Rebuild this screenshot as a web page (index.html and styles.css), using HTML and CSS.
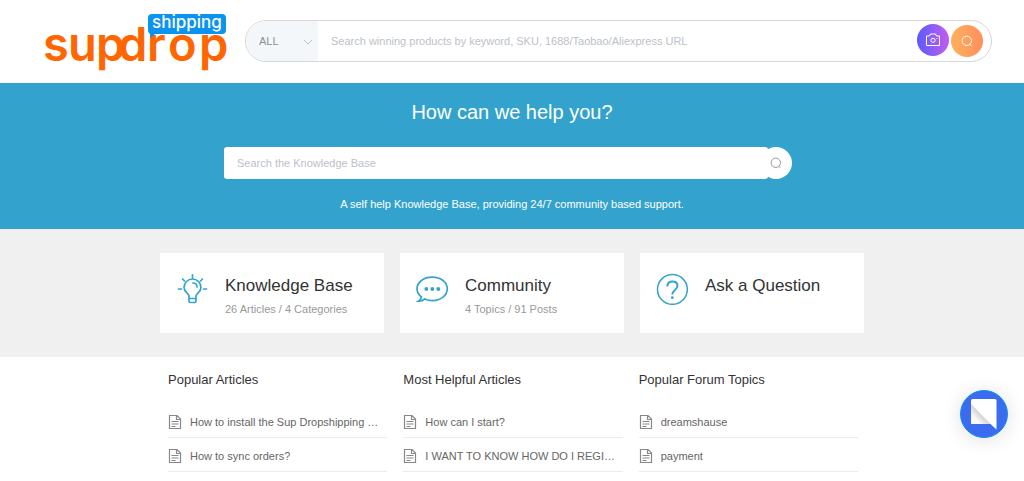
FILE: index.html
```html
<!DOCTYPE html>
<html lang="en">
<head>
<meta charset="utf-8">
<meta name="viewport" content="width=device-width, initial-scale=1">
<title>Help Center</title>
<link rel="stylesheet" href="styles.css">
</head>
<body>
<svg class="sprite" aria-hidden="true">
  <symbol id="doc" viewBox="0 0 14 16"><path d="M1.500 1.500h7.500l3.500 3.500v9.500h-11zM8.500 1.500v4h4M3.500 7.500h7M3.500 10h7M3.500 12.500h4" fill="none" stroke="currentColor" stroke-width="1.200"/></symbol>
  <symbol id="search" viewBox="0 0 12 12"><circle cx="5.800" cy="5.800" r="4.700" fill="none" stroke="currentColor"/><path d="M8.500 9.200l2 1.600" fill="none" stroke="currentColor"/></symbol>
</svg>

<header class="header">
  <a class="logo" href="#" aria-label="Sup Dropshipping">
    <svg viewBox="0 0 190 64" width="190" height="64">
      <text class="logo-word" y="52" x="-2 23 51 73 102 123 154">supdrop</text>
      <path class="logo-bubble" d="M107 5h70a4 4 0 0 1 4 4v12a4 4 0 0 1-4 4h-67l-5 4v-4a4 4 0 0 1-2-4V9a4 4 0 0 1 4-4z"/>
      <text class="logo-tag" x="107" y="19">shipping</text>
    </svg>
  </a>
  <form class="search">
    <div class="category">
      <select aria-label="Category"><option>ALL</option></select>
      <svg class="chevron" viewBox="0 0 10 6" width="10" height="6"><path d="M1 1l4 4 4-4" fill="none" stroke="currentColor"/></svg>
    </div>
    <input class="search-input" type="text" aria-label="Search products" placeholder="Search winning products by keyword, SKU, 1688/Taobao/Aliexpress URL">
    <button class="round camera" type="button" aria-label="Search by image">
      <svg viewBox="0 0 16 14" width="16" height="14" fill="none" stroke="currentColor"><path d="M1.500 3h3l1-2h5l1 2h3v9.500h-13z"/><circle cx="8" cy="7.300" r="2.100"/><path d="M11.500 5.500h1"/></svg>
    </button>
    <button class="round find" type="button" aria-label="Search"><svg width="12" height="12"><use href="#search"/></svg></button>
  </form>
</header>

<main>
  <section class="hero">
    <h1>How can we help you?</h1>
    <form class="kb">
      <input type="text" aria-label="Search the Knowledge Base" placeholder="Search the Knowledge Base">
      <button type="button" aria-label="Search"><svg width="12" height="12"><use href="#search"/></svg></button>
    </form>
    <p>A self help Knowledge Base, providing 24/7 community based support.</p>
  </section>

  <section class="band">
    <div class="cards">
      <a class="card" href="#">
        <svg viewBox="0 0 32 32" width="32" height="32" fill="none" stroke="currentColor" stroke-width="1.700" stroke-linecap="round">
          <path d="M13 25v-2c0-2.500-5-4-5-8.500a8.500 8.500 0 0 1 17 0c0 4.500-5 6-5 8.500v5q0 1.500-1.500 1.500h-4q-1.500 0-1.500-1.500zM13 25.500h7M17 10a4 4 0 0 1 4 4M16.500 1.800v3M2.500 16h3M27.500 16h3M6.500 6l2 2M26.500 6l-2 2"/>
        </svg>
        <div class="card-text"><h2>Knowledge Base</h2><p>26 Articles / 4 Categories</p></div>
      </a>
      <a class="card" href="#">
        <svg viewBox="0 0 32 32" width="32" height="32" fill="none" stroke="currentColor" stroke-width="1.700">
          <path d="M5.500 24C2.800 22 1 19 1 15.800c0-6.600 6.700-11.600 15.300-11.600s15 5 15 11.600-6.500 11.800-15 11.800c-3 0-5.500-.6-7.500-1.700-1.500 1.500-3.500 2.400-6.500 2.300 2-1.200 2.700-2.300 3.200-4.200z"/>
          <g fill="currentColor" stroke="none"><circle cx="10.300" cy="16" r="1.900"/><circle cx="16.300" cy="16" r="1.900"/><circle cx="22.300" cy="16" r="1.900"/></g>
        </svg>
        <div class="card-text"><h2>Community</h2><p>4 Topics / 91 Posts</p></div>
      </a>
      <a class="card" href="#">
        <svg viewBox="0 0 32 32" width="32" height="32" fill="none" stroke="currentColor" stroke-width="1.500">
          <circle cx="16.400" cy="16.400" r="14.900"/>
          <path d="M11.300 13.500c0-3 2-5 5.200-5s5 2 5 4.500c0 4-5.200 4-5.200 8.500" stroke-width="1.900"/><circle cx="16.300" cy="24.700" r="1.400" fill="currentColor" stroke="none"/>
        </svg>
        <div class="card-text"><h2>Ask a Question</h2></div>
      </a>
    </div>
  </section>

  <section class="lists">
    <div class="list">
      <h3>Popular Articles</h3>
      <ul>
        <li><svg width="14" height="16"><use href="#doc"/></svg><a href="#">How to install the Sup Dropshipping …</a></li>
        <li><svg width="14" height="16"><use href="#doc"/></svg><a href="#">How to sync orders?</a></li>
      </ul>
    </div>
    <div class="list">
      <h3>Most Helpful Articles</h3>
      <ul>
        <li><svg width="14" height="16"><use href="#doc"/></svg><a href="#">How can I start?</a></li>
        <li><svg width="14" height="16"><use href="#doc"/></svg><a href="#">I WANT TO KNOW HOW DO I REGI…</a></li>
      </ul>
    </div>
    <div class="list">
      <h3>Popular Forum Topics</h3>
      <ul>
        <li><svg width="14" height="16"><use href="#doc"/></svg><a href="#">dreamshause</a></li>
        <li><svg width="14" height="16"><use href="#doc"/></svg><a href="#">payment</a></li>
      </ul>
    </div>
  </section>
</main>

<button class="chat" type="button" aria-label="Open chat">
  <svg viewBox="0 0 26 31" width="26" height="31">
    <defs><linearGradient id="fold" x1="1" y1="0" x2="0" y2="1"><stop offset=".5" stop-color="#d2d2d2"/><stop offset=".75" stop-color="#f8f8f8"/></linearGradient></defs>
    <path d="M1.500 0h22.500q1.500 0 1.500 1.500v29L19.500 25h-18Q0 25 0 23.500v-22Q0 0 1.500 0z" fill="#fff"/>
    <path d="M0 5l19.500 20h-18Q0 25 0 23.500z" fill="url(#fold)"/>
  </svg>
</button>
</body>
</html>
```

FILE: styles.css
```css
* {
  box-sizing: border-box;
}

body {
  margin: 0;
  background: #fff;
  color: #333;
  font-family: "Liberation Sans", Arial, sans-serif;
  font-size: 11px;
  line-height: 16px;
}

h1, h2, h3, p, ul {
  margin: 0;
  padding: 0;
  font-weight: 400;
}

a {
  color: inherit;
  text-decoration: none;
}

input, select, button {
  margin: 0;
  border: 0;
  padding: 0;
  font: inherit;
}

input::placeholder {
  color: #bcc1c8;
  opacity: 1;
}

.sprite {
  display: none;
}

.header {
  display: flex;
  align-items: center;
  gap: 10px;
  padding: 9px 32px 10px 45px;
}

.logo {
  flex: none;
  height: 64px;
}

.logo svg {
  display: block;
  overflow: visible;
}

.logo-word {
  fill: #ff6600;
  font-family: Inter, sans-serif;
  font-size: 47px;
  font-weight: 600;
}

.logo-bubble {
  fill: #0a94f0;
}

.logo-tag {
  fill: #fff;
  font-family: Inter, sans-serif;
  font-size: 17px;
  font-weight: 500;
}

.search {
  display: flex;
  flex: 1;
  align-items: center;
  height: 42px;
  border: 1px solid #d5d7da;
  border-radius: 21px;
  padding-right: 8px;
  overflow: hidden;
}

.category {
  position: relative;
  flex: none;
  width: 72px;
  height: 100%;
  background: #f4f7fa;
}

.category select {
  width: 100%;
  height: 100%;
  padding-left: 13px;
  appearance: none;
  background: none;
  color: #8c9095;
}

.chevron {
  position: absolute;
  top: 18px;
  right: 5px;
  color: #bcc1c8;
  pointer-events: none;
}

.search-input {
  flex: 1;
  min-width: 0;
  height: 100%;
  padding: 0 13px;
}

.round {
  display: flex;
  flex: none;
  align-items: center;
  justify-content: center;
  width: 32px;
  height: 32px;
  border-radius: 50%;
  color: #fff;
}

.camera {
  margin: 0 2px 2px 0;
  background: linear-gradient(90deg, #5b5bfb, #c45cf0);
}

.find {
  background: linear-gradient(90deg, #ffb05c, #ff8f5c);
}

.hero {
  padding: 17px 16px;
  background: #33a3cd;
  color: #fff;
  text-align: center;
}

.hero h1 {
  font-size: 20px;
  line-height: 24px;
}

.kb {
  display: flex;
  max-width: 576px;
  margin: 23px auto 17px;
  padding-right: 8px;
}

.kb input {
  flex: 1;
  min-width: 0;
  height: 32px;
  padding: 0 13px;
  border-radius: 3px;
  background: #fff;
}

.kb button {
  display: flex;
  align-items: center;
  justify-content: center;
  width: 32px;
  height: 32px;
  margin-left: -8px;
  border-radius: 50%;
  background: #fff;
  color: #999;
}

.band {
  padding: 24px 16px;
  background: #f0f0f0;
}

.cards {
  display: grid;
  grid-template-columns: repeat(3, 1fr);
  gap: 16px;
  max-width: 704px;
  margin: 0 auto;
}

.card {
  display: flex;
  gap: 17px;
  min-height: 80px;
  padding: 20px 16px 14px;
  background: #fff;
  color: #33a3cd;
}

.card svg {
  flex: none;
}

.card h2 {
  color: #333;
  font-size: 17px;
  line-height: 26px;
}

.card p {
  margin-top: 2px;
  color: #999;
}

.lists {
  display: grid;
  grid-template-columns: repeat(3, 1fr);
  gap: 16px;
  max-width: 722px;
  margin: 0 auto;
  padding: 14px 15px 9px 17px;
}

.list {
  min-width: 0;
}

.list h3 {
  margin-bottom: 15px;
  font-size: 13px;
  line-height: 18px;
}

.list ul {
  list-style: none;
}

.list li {
  display: flex;
  align-items: center;
  gap: 8px;
  height: 34px;
  padding-top: 2px;
  border-bottom: 1px solid #ebebeb;
  color: #888;
}

.list svg {
  flex: none;
}

.list a {
  min-width: 0;
  overflow: hidden;
  color: #666;
  text-overflow: ellipsis;
  white-space: nowrap;
}

.chat {
  position: fixed;
  right: 16px;
  bottom: 43px;
  display: flex;
  align-items: center;
  justify-content: center;
  width: 48px;
  height: 48px;
  border: 1px solid #1190ee;
  border-radius: 50%;
  background: #3b6cf0;
  box-shadow: 0 2px 20px rgba(0, 0, 0, 0.12);
}
```
